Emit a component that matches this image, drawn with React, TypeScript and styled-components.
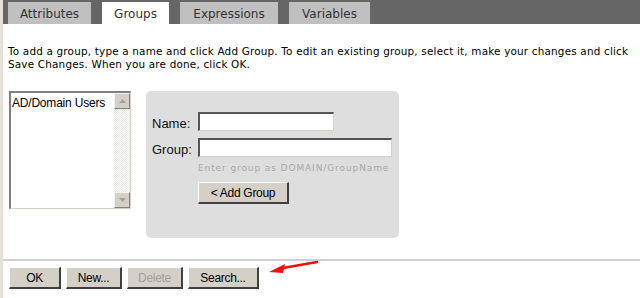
import styled, { createGlobalStyle } from "styled-components"

const GlobalStyle = createGlobalStyle`
  html, body {
    margin: 0;
    padding: 0;
    background: #ffffff;
  }
  body {
    font-family: "DejaVu Sans", Verdana, sans-serif;
    color: #000;
  }
`;

const Page = styled.div`
  width: 640px;
  height: 298px;
  overflow: hidden;
  position: relative;
  border-left: 3px solid #e4e1da;
  box-sizing: border-box;
  background: #fff;
`;

const TabBar = styled.div`
  height: 24px;
  background: #666666;
  display: flex;
  align-items: flex-end;
  gap: 11px;
  margin-left: -3px;
  padding-left: 8px;
`;

const Tab = styled.div<{ $active?: boolean; $w: number }>`
  width: ${(p) => p.$w}px;
  height: 22px;
  box-sizing: border-box;
  background: ${(p) => (p.$active ? "#ffffff" : "#c0c0c0")};
  color: #333;
  font-family: "DejaVu Sans", Verdana, sans-serif;
  font-size: 12px;
  display: flex;
  align-items: center;
  justify-content: center;
  padding-top: 1px;
`;

const Content = styled.div`
  padding: 21px 0 0 5px;
`;

const Intro = styled.p`
  margin: 0;
  font-size: 10.4px;
  line-height: 13px;
  letter-spacing: 0.2px;
  width: 625px;
`;

const Body = styled.div`
  display: flex;
  align-items: flex-start;
  gap: 15px;
  margin-top: 20px;
  margin-left: 1px;
`;

const ListBox = styled.div`
  width: 122px;
  height: 118px;
  box-sizing: border-box;
  border-top: 2px solid #808080;
  border-left: 2px solid #808080;
  border-right: 1px solid #d4d0c8;
  border-bottom: 1px solid #d4d0c8;
  display: flex;
  background: #fff;
`;

const ListItems = styled.div`
  flex: 1;
  font-family: "Liberation Sans", Tahoma, sans-serif;
  font-size: 12px;
  padding: 3px 0 0 1px;
  letter-spacing: -0.2px;
`;

const ScrollTrack = styled.div`
  width: 16px;
  display: flex;
  flex-direction: column;
  justify-content: space-between;
  background: repeating-conic-gradient(#e8e6e0 0% 25%, #ffffff 0% 50%) 0 0 / 2px 2px;
`;

const ScrollButton = styled.div`
  width: 16px;
  height: 16px;
  box-sizing: border-box;
  background: #d4d0c8;
  border-top: 1px solid #f4f3ee;
  border-left: 1px solid #f4f3ee;
  border-right: 1px solid #808080;
  border-bottom: 1px solid #808080;
  display: flex;
  align-items: center;
  justify-content: center;
`;

const Panel = styled.div`
  width: 253px;
  height: 147px;
  background: #dedede;
  border-radius: 5px;
  box-sizing: border-box;
  padding: 21px 0 0 6px;
  font-family: "Liberation Sans", Tahoma, sans-serif;
`;

const FieldGrid = styled.div`
  display: grid;
  grid-template-columns: 46px auto;
  row-gap: 7px;
  align-items: center;
`;

const Label = styled.label`
  font-size: 13px;
  color: #111;
  padding-top: 3px;
`;

const Input = styled.div<{ $w: number }>`
  width: ${(p) => p.$w}px;
  height: 19px;
  box-sizing: border-box;
  background: #fff;
  border-top: 2px solid #555;
  border-left: 2px solid #555;
  border-right: 1px solid #d4d0c8;
  border-bottom: 1px solid #d4d0c8;
`;

const Hint = styled.div`
  grid-column: 2;
  margin-top: -1px;
  font-family: "DejaVu Sans", Verdana, sans-serif;
  font-size: 9px;
  letter-spacing: 0.9px;
  color: #a8a8a8;
`;

const Button = styled.button<{ $w: number; $disabled?: boolean }>`
  width: ${(p) => p.$w}px;
  height: 22px;
  box-sizing: border-box;
  background: #d4d0c8;
  border-top: 1px solid #ffffff;
  border-left: 1px solid #ffffff;
  border-right: 2px solid #404040;
  border-bottom: 2px solid #404040;
  font-family: "Liberation Sans", Tahoma, sans-serif;
  font-size: 12px;
  color: ${(p) => (p.$disabled ? "#a0a0a0" : "#000")};
  padding: 0;
  letter-spacing: -0.3px;
`;

const AddWrap = styled.div`
  grid-column: 2;
  margin-top: 2px;
`;

const Divider = styled.div`
  position: absolute;
  left: 0;
  right: 0;
  top: 259px;
  height: 2px;
  background: #d0d0d0;
`;

const Footer = styled.div`
  position: absolute;
  left: 6px;
  top: 267px;
  display: flex;
  gap: 5px;
`;

const Arrow = styled.svg`
  position: absolute;
  left: 262px;
  top: 258px;
`;

const tabs = [
  { label: "Attributes", w: 83 },
  { label: "Groups", w: 67, active: true },
  { label: "Expressions", w: 98 },
  { label: "Variables", w: 81 },
];

export default function App() {
  return (
    <>
      <GlobalStyle />
      <Page>
        <TabBar>
          {tabs.map((t) => (
            <Tab key={t.label} $w={t.w} $active={t.active}>
              {t.label}
            </Tab>
          ))}
        </TabBar>
        <Content>
          <Intro>
            To add a group, type a name and click Add Group. To edit an existing group, select it, make your changes and click Save Changes. When you are done, click OK.
          </Intro>
          <Body>
            <ListBox>
              <ListItems>AD/Domain Users</ListItems>
              <ScrollTrack>
                <ScrollButton>
                  <svg width="7" height="4" viewBox="0 0 7 4">
                    <path d="M3.5 0 L7 4 L0 4 Z" fill="#a0a0a0" />
                  </svg>
                </ScrollButton>
                <ScrollButton>
                  <svg width="7" height="4" viewBox="0 0 7 4">
                    <path d="M0 0 L7 0 L3.5 4 Z" fill="#a0a0a0" />
                  </svg>
                </ScrollButton>
              </ScrollTrack>
            </ListBox>
            <Panel>
              <FieldGrid>
                <Label>Name:</Label>
                <Input $w={136} />
                <Label>Group:</Label>
                <Input $w={194} />
                <Hint>Enter group as DOMAIN/GroupName</Hint>
                <AddWrap>
                  <Button $w={91}>&lt; Add Group</Button>
                </AddWrap>
              </FieldGrid>
            </Panel>
          </Body>
        </Content>
        <Divider />
        <Footer>
          <Button $w={52}>OK</Button>
          <Button $w={56}>New...</Button>
          <Button $w={56} $disabled>Delete</Button>
          <Button $w={71}>Search...</Button>
        </Footer>
        <Arrow width="56" height="20" viewBox="0 0 56 20">
          <path d="M52 4 L18 10" stroke="#ee1111" strokeWidth="2.5" strokeLinecap="round" />
          <path d="M4 14 L20 6 L18 15 Z" fill="#ee1111" />
        </Arrow>
      </Page>
    </>
  )
}
